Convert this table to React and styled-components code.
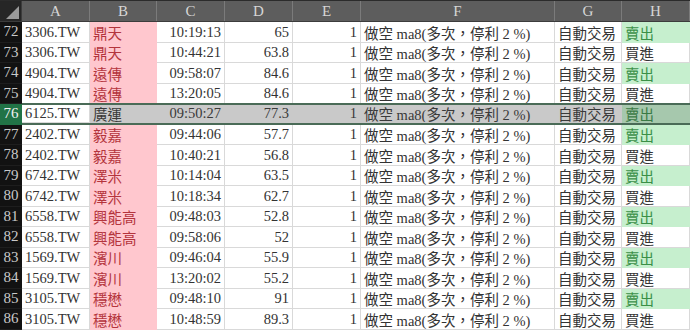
import styled, { createGlobalStyle } from 'styled-components';

const GlobalStyle = createGlobalStyle`
  html, body {
    margin: 0;
    padding: 0;
    background: #ffffff;
    overflow: hidden;
  }
  body {
    font-family: "Liberation Serif", "Noto Sans CJK TC", serif;
  }
`;

const COLS = '68px 67px 68px 68px 68px 194px 67px 1fr';
const ROW_H = '20.5px';

const Sheet = styled.div`
  width: 690px;
  height: 330px;
  overflow: hidden;
  border-top: 1px solid #2b2b2b;
  box-sizing: border-box;
`;

const HeaderRow = styled.div`
  display: flex;
  height: 20px;
  background: #5d5d5d;
  border-bottom: 1px solid #3c3c3c;
`;

const Corner = styled.div`
  width: 22px;
  flex-shrink: 0;
  background: #262626;
  position: relative;
  border-right: 1px solid #3c3c3c;
  box-sizing: border-box;

  &::after {
    content: '';
    position: absolute;
    right: 2px;
    bottom: 2px;
    width: 13px;
    height: 13px;
    background: #9a9a9a;
    clip-path: polygon(100% 0, 100% 100%, 0 100%);
  }
`;

const HeaderCells = styled.div`
  flex: 1;
  display: grid;
  grid-template-columns: ${COLS};
`;

const ColHead = styled.div`
  display: flex;
  align-items: center;
  justify-content: center;
  color: #d6d6d6;
  font-size: 15px;
  border-right: 1px solid #7b7b7b;
  box-sizing: border-box;
`;

const Row = styled.div`
  display: flex;
  height: ${ROW_H};
`;

const RowHead = styled.div`
  width: 22px;
  flex-shrink: 0;
  display: flex;
  align-items: center;
  justify-content: center;
  font-size: 15px;
  color: ${p => (p.$active ? '#f2f2f2' : '#c9c9c9')};
  background: ${p => (p.$active ? '#217346' : '#121212')};
  border-bottom: 1px solid ${p => (p.$active ? '#217346' : '#1e1e1e')};
  box-sizing: border-box;
`;

const Cells = styled.div`
  flex: 1;
  display: grid;
  grid-template-columns: ${COLS};
  box-sizing: border-box;
  ${p => p.$selected && `
    border-top: 2px solid #4a6b57;
    border-bottom: 2px solid #4a6b57;
    margin-top: -1px;
    height: calc(${ROW_H} + 1px);
  `}
`;

const fills = {
  pink: { bg: '#ffc7ce', fg: '#b4343c' },
  green: { bg: '#c6efce', fg: '#3a8f47' },
  selGreen: { bg: '#a6c8ad', fg: '#3a7a45' },
  sel: { bg: '#c9c9c9', fg: '#3a3a3a' },
  active: { bg: '#ffffff', fg: '#333333' },
};

const Cell = styled.div`
  display: flex;
  align-items: center;
  justify-content: ${p => (p.$right ? 'flex-end' : 'flex-start')};
  padding: ${p => (p.$right ? '1px 3px 0 0' : '1px 0 0 3px')};
  font-size: 14.5px;
  white-space: nowrap;
  overflow: hidden;
  box-sizing: border-box;
  color: ${p => (p.$fill ? fills[p.$fill].fg : '#333333')};
  background: ${p => (p.$fill ? fills[p.$fill].bg : '#ffffff')};
  border-right: 1px solid ${p => (p.$fill && p.$fill !== 'active' ? fills[p.$fill].bg : '#d9d9d9')};
  border-bottom: 1px solid ${p => (p.$fill && p.$fill !== 'active' ? fills[p.$fill].bg : '#d9d9d9')};
`;

const data = [
  [72, '3306.TW', '鼎天', '10:19:13', '65', true],
  [73, '3306.TW', '鼎天', '10:44:21', '63.8', false],
  [74, '4904.TW', '遠傳', '09:58:07', '84.6', true],
  [75, '4904.TW', '遠傳', '13:20:05', '84.6', false],
  [76, '6125.TW', '廣運', '09:50:27', '77.3', true],
  [77, '2402.TW', '毅嘉', '09:44:06', '57.7', true],
  [78, '2402.TW', '毅嘉', '10:40:21', '56.8', false],
  [79, '6742.TW', '澤米', '10:14:04', '63.5', true],
  [80, '6742.TW', '澤米', '10:18:34', '62.7', false],
  [81, '6558.TW', '興能高', '09:48:03', '52.8', true],
  [82, '6558.TW', '興能高', '09:58:06', '52', false],
  [83, '1569.TW', '濱川', '09:46:04', '55.9', true],
  [84, '1569.TW', '濱川', '13:20:02', '55.2', false],
  [85, '3105.TW', '穩懋', '09:48:10', '91', true],
  [86, '3105.TW', '穩懋', '10:48:59', '89.3', false],
];

const SELECTED = 76;

function DataRow({ row }) {
  const [num, code, name, time, price, sell] = row;
  const sel = num === SELECTED;
  const plain = sel ? 'sel' : undefined;
  return (
    <Row>
      <RowHead $active={sel}>{num}</RowHead>
      <Cells $selected={sel}>
        <Cell $fill={sel ? 'active' : undefined}>{code}</Cell>
        <Cell $fill={sel ? 'sel' : 'pink'}>{name}</Cell>
        <Cell $right $fill={plain}>{time}</Cell>
        <Cell $right $fill={plain}>{price}</Cell>
        <Cell $right $fill={plain}>1</Cell>
        <Cell $fill={plain}>做空 ma8(多次，停利 2 %)</Cell>
        <Cell $fill={plain}>自動交易</Cell>
        <Cell $fill={sell ? (sel ? 'selGreen' : 'green') : plain}>{sell ? '賣出' : '買進'}</Cell>
      </Cells>
    </Row>
  );
}

export default function App() {
  return (
    <>
      <GlobalStyle />
      <Sheet>
        <HeaderRow>
          <Corner />
          <HeaderCells>
            {['A', 'B', 'C', 'D', 'E', 'F', 'G', 'H'].map(c => (
              <ColHead key={c}>{c}</ColHead>
            ))}
          </HeaderCells>
        </HeaderRow>
        {data.map(r => (
          <DataRow key={r[0]} row={r} />
        ))}
      </Sheet>
    </>
  );
}
